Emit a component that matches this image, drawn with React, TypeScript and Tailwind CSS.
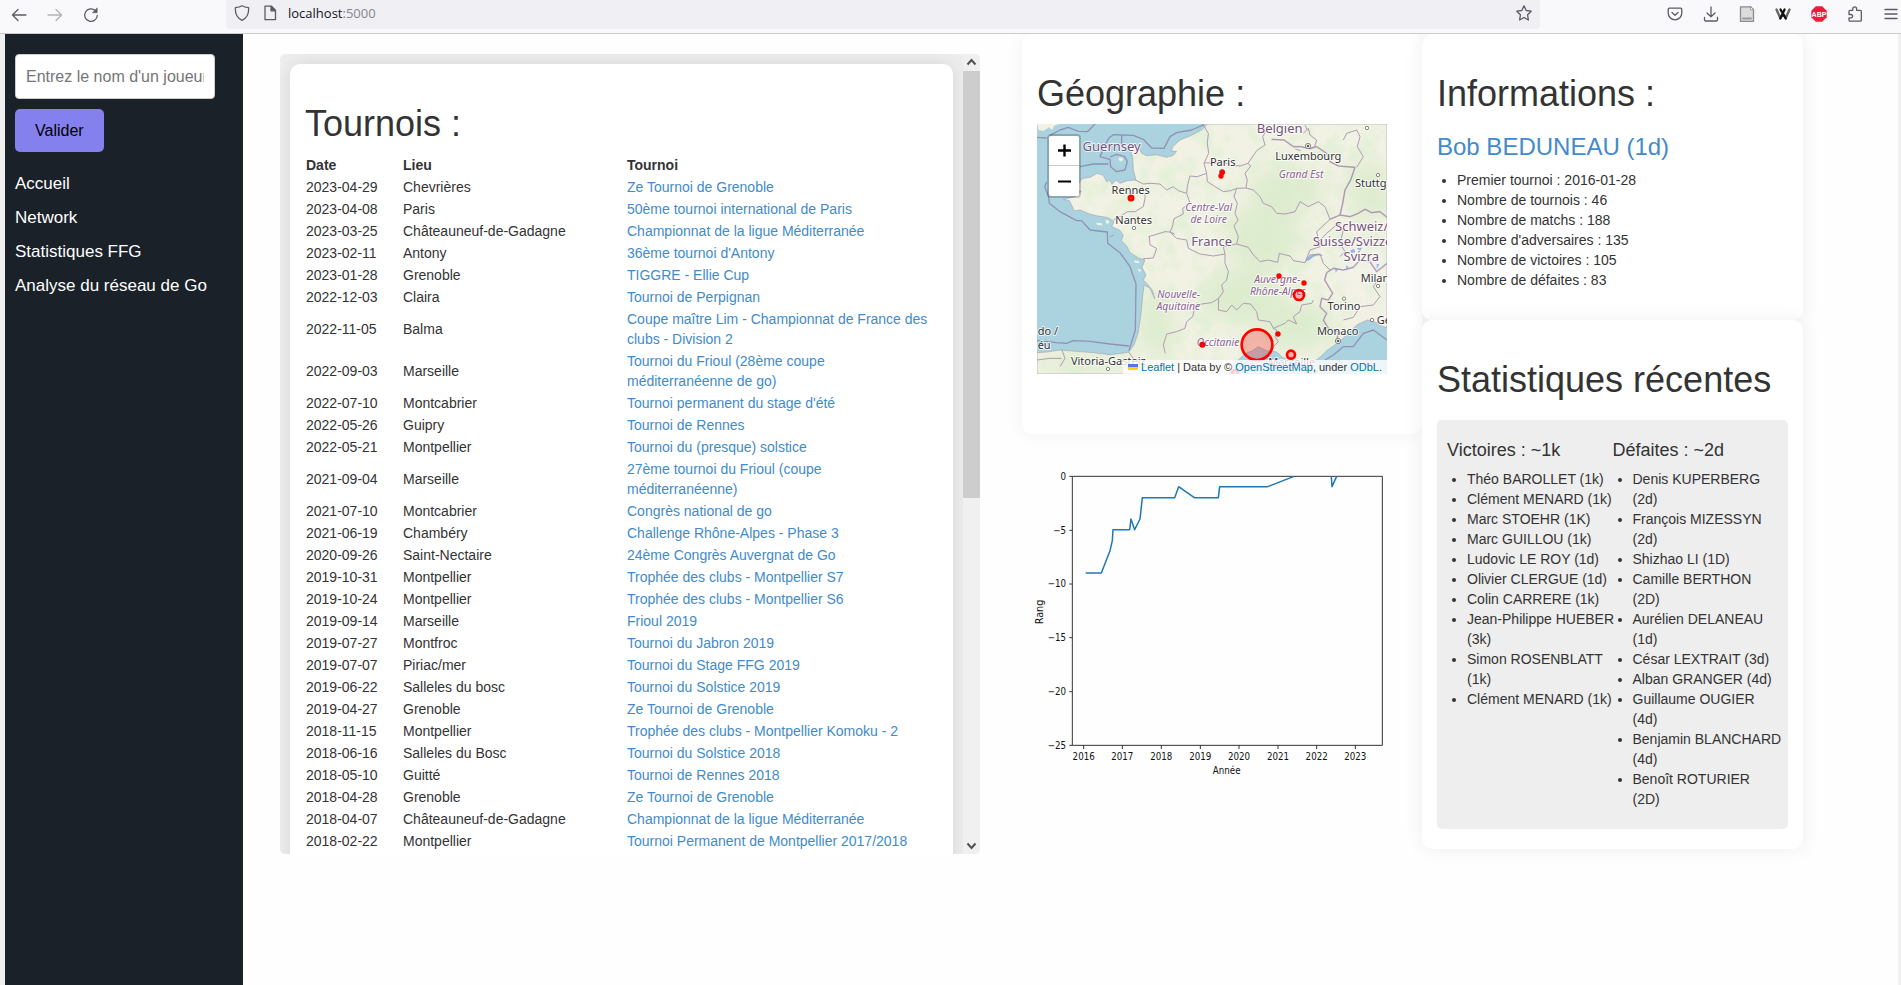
import React from "react";

type Tournament = [date: string, place: string, name: string];

const tournaments: Tournament[] = [
  ["2023-04-29", "Chevrières", "Ze Tournoi de Grenoble"],
  ["2023-04-08", "Paris", "50ème tournoi international de Paris"],
  ["2023-03-25", "Châteauneuf-de-Gadagne", "Championnat de la ligue Méditerranée"],
  ["2023-02-11", "Antony", "36ème tournoi d'Antony"],
  ["2023-01-28", "Grenoble", "TIGGRE - Ellie Cup"],
  ["2022-12-03", "Claira", "Tournoi de Perpignan"],
  ["2022-11-05", "Balma", "Coupe maître Lim - Championnat de France des clubs - Division 2"],
  ["2022-09-03", "Marseille", "Tournoi du Frioul (28ème coupe méditerranéenne de go)"],
  ["2022-07-10", "Montcabrier", "Tournoi permanent du stage d'été"],
  ["2022-05-26", "Guipry", "Tournoi de Rennes"],
  ["2022-05-21", "Montpellier", "Tournoi du (presque) solstice"],
  ["2021-09-04", "Marseille", "27ème tournoi du Frioul (coupe méditerranéenne)"],
  ["2021-07-10", "Montcabrier", "Congrès national de go"],
  ["2021-06-19", "Chambéry", "Challenge Rhône-Alpes - Phase 3"],
  ["2020-09-26", "Saint-Nectaire", "24ème Congrès Auvergnat de Go"],
  ["2019-10-31", "Montpellier", "Trophée des clubs - Montpellier S7"],
  ["2019-10-24", "Montpellier", "Trophée des clubs - Montpellier S6"],
  ["2019-09-14", "Marseille", "Frioul 2019"],
  ["2019-07-27", "Montfroc", "Tournoi du Jabron 2019"],
  ["2019-07-07", "Piriac/mer", "Tournoi du Stage FFG 2019"],
  ["2019-06-22", "Salleles du bosc", "Tournoi du Solstice 2019"],
  ["2019-04-27", "Grenoble", "Ze Tournoi de Grenoble"],
  ["2018-11-15", "Montpellier", "Trophée des clubs - Montpellier Komoku - 2"],
  ["2018-06-16", "Salleles du Bosc", "Tournoi du Solstice 2018"],
  ["2018-05-10", "Guitté", "Tournoi de Rennes 2018"],
  ["2018-04-28", "Grenoble", "Ze Tournoi de Grenoble"],
  ["2018-04-07", "Châteauneuf-de-Gadagne", "Championnat de la ligue Méditerranée"],
  ["2018-02-22", "Montpellier", "Tournoi Permanent de Montpellier 2017/2018"],
];

const facts = [
  "Premier tournoi : 2016-01-28",
  "Nombre de tournois : 46",
  "Nombre de matchs : 188",
  "Nombre d'adversaires : 135",
  "Nombre de victoires : 105",
  "Nombre de défaites : 83",
];

const wins = [
  "Théo BAROLLET (1k)",
  "Clément MENARD (1k)",
  "Marc STOEHR (1K)",
  "Marc GUILLOU (1k)",
  "Ludovic LE ROY (1d)",
  "Olivier CLERGUE (1d)",
  "Colin CARRERE (1k)",
  "Jean-Philippe HUEBER (3k)",
  "Simon ROSENBLATT (1k)",
  "Clément MENARD (1k)",
];

const losses = [
  "Denis KUPERBERG (2d)",
  "François MIZESSYN (2d)",
  "Shizhao LI (1D)",
  "Camille BERTHON (2D)",
  "Aurélien DELANEAU (1d)",
  "César LEXTRAIT (3d)",
  "Alban GRANGER (4d)",
  "Guillaume OUGIER (4d)",
  "Benjamin BLANCHARD (4d)",
  "Benoît ROTURIER\n(2D)",
];

function Icon({ label, className = "", children }: { label: string; className?: string; children: React.ReactNode }) {
  return (
    <button type="button" aria-label={label} className={`size-4 shrink-0 text-[#5b5b66] ${className}`}>
      <svg viewBox="0 0 16 16" className="size-4" fill="none" stroke="currentColor" strokeWidth="1.3" strokeLinecap="round" strokeLinejoin="round">
        {children}
      </svg>
    </button>
  );
}

function BrowserBar() {
  return (
    <header className="relative z-10 flex h-[34px] items-start border-b border-[#cccccf] bg-[#f9f9fb]">
      <div className="flex h-[29px] w-[226px] shrink-0 items-center gap-5 pl-[11px]">
        <Icon label="Page précédente">
          <path d="M15 8H1.5M7 2.5 1.5 8 7 13.5" />
        </Icon>
        <Icon label="Page suivante" className="opacity-45">
          <path d="M1 8h13.5M9 2.5 14.5 8 9 13.5" />
        </Icon>
        <Icon label="Actualiser">
          <path d="M14.3 8.5A6.3 6.3 0 1 1 12.3 3.5" />
          <path d="M14.2 1.2V5.7H9.7Z" fill="currentColor" strokeWidth="0.6" />
        </Icon>
      </div>
      <div className="flex h-[29px] min-w-0 flex-1 items-center rounded-b bg-[#f0f0f4] px-2 pb-1">
        <Icon label="Protection">
          <path d="M8 .8C6 2 3.5 2.5 1.4 2.7 1 8 3 13 8 15.3 13 13 15 8 14.6 2.7 12.5 2.5 10 2 8 .8Z" />
        </Icon>
        <Icon label="Site" className="ml-3">
          <path d="M3 1.2h6.5l4 4v9.5H3Z" />
          <path d="M9 1.5v4.3h4.3Z" fill="currentColor" />
        </Icon>
        <span className="ml-2.5 flex-1 font-['Open_Sans',sans-serif] text-[13px] leading-5 text-[#15141a]">
          localhost<span className="text-[#85848d]">:5000</span>
        </span>
        <Icon label="Marquer cette page">
          <path d="M8 .8l2.2 4.7 5 .7-3.6 3.6.8 5.2L8 12.5 3.6 15l.8-5.2L.8 6.2l5-.7Z" />
        </Icon>
      </div>
      <div className="flex h-[27px] w-[361px] shrink-0 items-center justify-end gap-5 pr-0.5">
        <Icon label="Pocket">
          <path d="M2.5 2.2h11a1.3 1.3 0 0 1 1.3 1.3V7a6.8 6.8 0 0 1-13.6 0V3.5a1.3 1.3 0 0 1 1.3-1.3Z" />
          <path d="M5 6.5 8 9.3 11 6.5" />
        </Icon>
        <Icon label="Téléchargements">
          <path d="M8 1v9.5M4 7l4 3.7L12 7M1.500 11.500v2.200q0 1.300 1.300 1.300h10.400q1.300 0 1.300-1.300v-2.200" />
        </Icon>
        <Icon label="Archive">
          <path d="M1.5.8h10l3 3v11.5h-13Z" fill="#dcdcdc" stroke="#8c8c8c" />
          <path d="M11.5.8v3h3Z" fill="#fff" stroke="#8c8c8c" strokeWidth="0.8" />
          <path d="M4 12.5h8" stroke="#999" strokeWidth="1.8" />
        </Icon>
        <Icon label="Wikiwand">
          <path d="M1.5 3.5 5.3 12 8 8l2.8 4L14.5 3.5" stroke="#666" strokeWidth="2.4" />
          <path d="M5.5 3.5 10.8 12.5M9.6 3.5 5.3 12.5" stroke="#111" strokeWidth="2.3" />
        </Icon>
        <Icon label="Adblock Plus">
          <path d="M4.8.3h6.4l4.5 4.5v6.4l-4.5 4.5H4.8L.3 11.2V4.8Z" fill="#ed1c3c" stroke="none" />
          <text x="8" y="10.5" textAnchor="middle" fontSize="7" fontWeight="700" fill="#fff" stroke="none" fontFamily="Liberation Sans, sans-serif">ABP</text>
        </Icon>
        <Icon label="Extensions">
          <path d="M2 8.5V5.3q0-1 1-1h2.8V2.8a1.9 1.9 0 0 1 3.8 0v1.5h3.7q1 0 1 1v8.9q0 1-1 1H3q-1 0-1-1v-2.4h2a1.65 1.65 0 0 0 0-3.3Z" />
        </Icon>
        <Icon label="Menu">
          <path d="M2 3.5h12M2 8h12M2 12.5h12" />
        </Icon>
      </div>
    </header>
  );
}

function Sidebar() {
  return (
    <aside className="w-[238px] shrink-0 bg-[#1a2129] px-2.5 pt-5 text-base">
      <form onSubmit={(e) => e.preventDefault()}>
        <input
          type="text"
          aria-label="Nom du joueur"
          placeholder="Entrez le nom d'un joueur"
          className="block h-[45px] w-[200px] rounded border border-[#ccc] bg-white px-2.5 placeholder:text-[#757575]"
        />
        <button type="submit" className="mt-2.5 block h-[43px] rounded-[5px] bg-[#8480ee] px-5 text-black">
          Valider
        </button>
      </form>
      <nav className="mt-[15px] flex flex-col text-[17px] leading-[34px] text-white">
        <a href="#accueil">Accueil</a>
        <a href="#network">Network</a>
        <a href="#ffg">Statistiques FFG</a>
        <a href="#analyse">Analyse du réseau de Go</a>
      </nav>
    </aside>
  );
}

function Tournaments() {
  return (
    <section className="mt-5 flex h-[800px] min-w-0 flex-[700] overflow-hidden rounded-[5px] bg-[#eee]">
      <div className="min-w-0 flex-1 overflow-y-auto p-2.5 [scrollbar-width:none]">
        <div className="rounded-[10px] bg-white px-[15px] pt-10 pb-20 shadow-[0_0_20px_rgba(0,0,0,0.1)]">
          <h1 className="mb-2.5 text-[36px] leading-10">Tournois :</h1>
          <table className="w-full table-fixed border-collapse text-left">
            <colgroup>
              <col className="w-[97px]" />
              <col className="w-[224px]" />
              <col />
            </colgroup>
            <thead>
              <tr>
                <th className="p-px">Date</th>
                <th className="p-px">Lieu</th>
                <th className="p-px">Tournoi</th>
              </tr>
            </thead>
            <tbody>
              {tournaments.map(([date, place, name]) => (
                <tr key={date}>
                  <td className="p-px">{date}</td>
                  <td className="p-px">{place}</td>
                  <td className="py-px pr-1.5 pl-px">
                    <a href="#tournoi" className="text-[#428bca]">{name}</a>
                  </td>
                </tr>
              ))}
            </tbody>
          </table>
        </div>
      </div>
      <div className="flex w-[17px] shrink-0 flex-col items-center bg-[#f0f0f0] text-[#505050]" aria-hidden="true">
        <svg viewBox="0 0 17 17" className="size-[17px]" fill="none" stroke="currentColor" strokeWidth="2">
          <path d="M4.5 10.5 8.5 6l4 4.5" />
        </svg>
        <div className="h-[427px] w-full bg-[#cdcdcd]" />
        <div className="flex-1" />
        <svg viewBox="0 0 17 17" className="size-[17px]" fill="none" stroke="currentColor" strokeWidth="2">
          <path d="M4.5 6.5 8.5 11l4-4.5" />
        </svg>
      </div>
    </section>
  );
}

const LAND =
  "M592 282 575 300 540 318 510 330 488 350 484 364 500 364 490 376 470 382 440 374 410 377 395 370 390 358 372 350 358 352 368 382 370 420 378 450 352 452 330 460 318 450 306 463 300 450 290 455 280 436 262 430 240 442 215 446 205 462 190 480 214 484 195 500 160 508 178 512 186 528 192 543 210 540 238 552 262 558 280 560 296 564 312 575 305 590 328 600 340 615 334 632 350 648 360 668 385 684 405 690 396 712 408 735 400 750 414 765 428 782 434 806 420 775 402 765 398 800 392 860 384 910 372 945 356 966 335 970 300 974 250 968 200 964 150 960 110 966 81 968V1032H655L670 1005 690 985 708 970 728 962 745 950 770 962 800 966 820 984 845 990 870 1004 905 1000 930 982 950 962 985 938 1010 915 1040 885 1072 870 1100 878 1118 890 1131 892V282Z";

const mapBorders = [
  "M578 282 595 310 592 340 596 370 582 400 590 430 592 455 615 470 640 485 662 482 680 475 708 474 712 450 705 430 722 408 714 400 690 408 660 406 640 395 610 400 582 398",
  "M714 400 740 362 765 345 758 320 770 300M590 430 562 440 540 438 532 468 530 490",
  "M376 450 400 462 420 460 450 462 470 480 490 470 505 482 530 490 540 520 518 535 520 552 492 566 488 588 480 606 494 612",
  "M300 620 312 615M352 545 375 545 400 530 406 500 396 470M352 545 330 560 310 570",
  "M415 620 430 616 465 605 480 606 500 625 530 630 535 655 570 672 610 678 645 672 640 650 680 642 715 652 728 672 750 695 775 690 803 697 808 670 840 678 850 692 885 698 900 660 930 650 920 605 960 568 945 530 925 515 895 530 870 515 855 545 825 552 800 550 785 530 760 520 750 500 730 480 708 474",
  "M680 475 672 500 682 520 675 550 684 570 672 588 685 620 680 642M400 686 430 684 440 655 420 645 418 620",
  "M645 672 645 700 655 725 650 750 635 765 640 785 626 805 605 818 575 822 555 828 548 860 530 875 525 895 500 905 470 912 460 945 466 970",
  "M626 805 625 840 650 845 665 825 680 840 700 820 722 822 740 845 745 870 780 875 790 895 800 900 795 920 805 935 790 950 782 964",
  "M790 895 825 880 835 870 860 882 850 860 870 845 875 825 905 820 910 810M885 698 900 675 930 672 940 700 960 720",
  "M785 328 822 330 850 350 872 350 900 356 920 350 950 370 960 395 985 408 1035 412 1022 450 1005 480 998 520 990 555",
  "M856 357 872 362M880 310 895 295 900 315 920 330 914 350 900 356M885 286 892 300M1000 330 1010 310 1040 300 1050 320 1042 350 1060 380 1040 412",
  "M990 555 960 568M990 555 1020 560 1045 550 1065 538 1085 548 1110 545 1131 562M950 728 970 715 1000 720 1030 712 1050 690 1080 695 1100 725 1131 700",
  "M950 728 944 750 968 790 955 810 935 805 930 830 950 850 940 870 955 895 985 905 980 935",
  "M356 966 370 985 362 1000 400 1018M155 958 165 985 150 1010M81 990 120 985 155 985M1000 870 1030 862 1050 830 1090 825 1110 800 1090 770 1110 740",
  "M930 650 920 640 950 610 985 580 1000 600 990 640 1005 665 990 680",
];

const nationalBorders = [mapBorders[9], mapBorders[11], mapBorders[12]];

const seaLines = [
  "M81 322 110 324M150 300 175 292 205 304 232 305 255 282M150 300 120 316",
  "M335 315 370 316 400 328 425 354 462 355 480 320 500 308 545 300 582 284",
  "M335 315 310 314 296 325 285 345 270 380 300 388 302 410 320 425 345 420 352 395 344 380 320 373 300 381M335 315 335 345M295 402 250 402 210 410",
  "M110 455 104 470 116 500 118 520 150 545 200 572 215 572 240 600 292 606 293 640 330 668 360 710 378 762 376 900 357 962",
  "M81 932 140 938 170 940 190 932 240 934 300 942 357 948",
  "M945 990 970 975 1000 950 1030 950 1060 910 1090 900 1131 930",
];

type Label = { x: number; y: number; t: string; kind: "city" | "country" | "region"; anchor?: "start" | "middle" };

const labels: Label[] = [
  { x: 305, y: 364, t: "Guernsey", kind: "country" },
  { x: 809, y: 309, t: "Belgien", kind: "country" },
  { x: 605, y: 647, t: "France", kind: "country" },
  { x: 975, y: 603, t: "Schweiz/", kind: "country", anchor: "start" },
  { x: 908, y: 648, t: "Suisse/Svizzera/", kind: "country", anchor: "start" },
  { x: 1054, y: 693, t: "Svizra", kind: "country" },
  { x: 638, y: 409, t: "Paris", kind: "city" },
  { x: 362, y: 491, t: "Rennes", kind: "city" },
  { x: 371, y: 582, t: "Nantes", kind: "city" },
  { x: 895, y: 391, t: "Luxembourg", kind: "city" },
  { x: 1035, y: 472, t: "Stuttgart", kind: "city", anchor: "start" },
  { x: 1052, y: 755, t: "Milano", kind: "city", anchor: "start" },
  { x: 1002, y: 840, t: "Torino", kind: "city" },
  { x: 1100, y: 881, t: "Genova", kind: "city", anchor: "start" },
  { x: 983, y: 915, t: "Monaco", kind: "city" },
  { x: 845, y: 1009, t: "Marseille", kind: "city" },
  { x: 295, y: 1004, t: "Vitoria-Gasteiz", kind: "city" },
  { x: 83, y: 915, t: "do /", kind: "city", anchor: "start" },
  { x: 83, y: 956, t: "éu", kind: "city", anchor: "start" },
  { x: 873, y: 443, t: "Grand Est", kind: "region" },
  { x: 596, y: 543, t: "Centre-Val", kind: "region" },
  { x: 596, y: 579, t: "de Loire", kind: "region" },
  { x: 506, y: 804, t: "Nouvelle-", kind: "region" },
  { x: 505, y: 839, t: "Aquitaine", kind: "region" },
  { x: 802, y: 760, t: "Auvergne-", kind: "region" },
  { x: 804, y: 795, t: "Rhône-Alpes", kind: "region" },
  { x: 624, y: 947, t: "Occitanie", kind: "region" },
];

const labelStyle = {
  city: { size: 33, fill: "#333", style: "normal" },
  country: { size: 39, fill: "#75547b", style: "normal" },
  region: { size: 31, fill: "#8a6392", style: "italic" },
};

const townDots = [
  [372, 594], [1104, 435], [1104, 768], [1002, 806], [1086, 870], [294, 1017], [1071, 294],
];

const markers = [
  [363, 504, 6, 9], [637, 427, 4, 8], [633, 438, 4, 8], [807, 738, 4, 8], [882, 759, 4, 8],
  [867, 795, 15, 8], [804, 912, 4, 8], [577, 944, 5, 8], [741, 944, 46, 8], [843, 974, 12, 8], [675, 1029, 9, 8],
];

function FranceMap() {
  return (
    <div className="relative h-[250px] w-[350px] max-w-full overflow-hidden bg-[#aad3df]">
      <svg viewBox="81 282 1050 750" className="block h-[250px] w-[350px]" role="img" aria-label="Carte des tournois">
        <defs>
          <clipPath id="land"><path d={LAND} /></clipPath>
          <filter id="forest" x="0" y="0" width="1" height="1">
            <feTurbulence type="fractalNoise" baseFrequency="0.018" numOctaves="5" seed="8" />
            <feColorMatrix values="0 0 0 0 0.72  0 0 0 0 0.86  0 0 0 0 0.64  0 3.6 0 0 -1.55" />
          </filter>
          <filter id="soft" x="-50%" y="-50%" width="200%" height="200%"><feGaussianBlur stdDeviation="28" /></filter>
        </defs>
        <path d={LAND} fill="#f2f2e4" />
        <path d="M81 282H148L132 288 126 300 118 292 100 303 86 300Z" fill="#f2f2e4" />
        <g clipPath="url(#land)">
          <g filter="url(#soft)" fill="#d3e8c2" opacity="0.65">
            <ellipse cx="830" cy="480" rx="110" ry="70" />
            <ellipse cx="760" cy="620" rx="110" ry="100" />
            <ellipse cx="700" cy="800" rx="130" ry="80" />
            <ellipse cx="440" cy="880" rx="50" ry="100" />
            <ellipse cx="860" cy="890" rx="110" ry="70" />
            <ellipse cx="1080" cy="480" rx="60" ry="90" />
            <ellipse cx="200" cy="1000" rx="120" ry="25" />
          </g>
          <rect x="81" y="282" width="1050" height="750" filter="url(#forest)" opacity="0.6" />
          <g filter="url(#soft)" fill="#f3f2ea" opacity="0.8">
            <ellipse cx="1060" cy="710" rx="70" ry="50" />
            <ellipse cx="1070" cy="820" rx="50" ry="30" />
          </g>
        </g>
        <path d="M324 384l12-2 4 8-10 5ZM258 578l18 2 2 6-16-1ZM370 692l14 0 6 8-14-2ZM382 716l14 4-8 6ZM286 572l8-3 5 10-10 2Z" fill="#f2f2e4" />
        <path d="M888 690q15-22 44-18l8 6q-26-6-44 14ZM1020 662l12-6 4 10-12 4ZM1040 655l16-2-6 10ZM1008 706l8 4-6 12ZM975 712l8 8-6 8ZM1100 702l8 0-8 16Z" fill="#8fb7e8" />
        <g fill="none" stroke="#ad9cb2" strokeWidth="3" strokeLinejoin="round">
          {mapBorders.map((d) => <path key={d} d={d} />)}
        </g>
        <g fill="none" stroke="#a78fab" strokeWidth="5" opacity="0.5" strokeLinejoin="round">
          {nationalBorders.map((d) => <path key={d} d={d} />)}
        </g>
        <g fill="none" stroke="#8d86ad" strokeWidth="4" strokeLinejoin="round" opacity="0.85">
          {seaLines.map((d) => <path key={d} d={d} />)}
        </g>
        <path d={LAND} fill="none" stroke="#a5a3b8" strokeWidth="2" />
        <g fill="#fff" stroke="#555" strokeWidth="2">
          {townDots.map(([x, y]) => <circle key={`${x}-${y}`} cx={x} cy={y} r="5" />)}
          {[[894, 348], [984, 933], [636, 426]].map(([x, y]) => (
            <g key={`${x}-${y}`}>
              <circle cx={x} cy={y} r="8" />
              <circle cx={x} cy={y} r="3" fill="#333" />
            </g>
          ))}
        </g>
        <g fontFamily="Noto Sans, sans-serif" stroke="#fff" strokeOpacity="0.75" strokeWidth="6" strokeLinejoin="round" paintOrder="stroke">
          {labels.map((l) => (
            <text
              key={l.t}
              x={l.x}
              y={l.y}
              textAnchor={l.anchor ?? "middle"}
              fontSize={labelStyle[l.kind].size}
              fontStyle={labelStyle[l.kind].style}
              fill={labelStyle[l.kind].fill}
            >
              {l.t}
            </text>
          ))}
        </g>
        <g stroke="#f00" fill="#f00" fillOpacity="0.25">
          {markers.map(([x, y, r, w]) => <circle key={`${x}-${y}`} cx={x} cy={y} r={r} strokeWidth={w} />)}
        </g>
      </svg>
      <div className="absolute top-2.5 left-2.5 flex flex-col rounded border-2 border-black/20 bg-clip-padding">
        <button type="button" aria-label="Zoom avant" className="flex size-[30px] items-center justify-center rounded-t-xs border-b border-[#ccc] bg-white">
          <svg viewBox="0 0 13 13" className="size-[13px]" stroke="#000" strokeWidth="2.4"><path d="M0 6.5h13M6.5.5v12" /></svg>
        </button>
        <button type="button" aria-label="Zoom arrière" className="flex size-[30px] items-center justify-center rounded-b-xs bg-white">
          <svg viewBox="0 0 13 13" className="size-[13px]" stroke="#000" strokeWidth="2"><path d="M0 6.5h13" /></svg>
        </button>
      </div>
      <div className="absolute right-0 bottom-0 flex h-3.5 items-center gap-[3px] bg-white/80 px-[5px] font-['Liberation_Sans',Arial,sans-serif] text-[11px] leading-[14px] whitespace-nowrap text-[#333]">
        <svg viewBox="0 0 10 6" className="h-1.5 w-2.5"><path d="M0 0h10v3H0Z" fill="#4c7be1" /><path d="M0 3h10v3H0Z" fill="#ffd500" /></svg>
        <span>
          <a href="#leaflet" className="text-[#0078a8]">Leaflet</a> | Data by © <a href="#osm" className="text-[#0078a8]">OpenStreetMap</a>, under <a href="#odbl" className="text-[#0078a8]">ODbL</a>.
        </span>
      </div>
    </div>
  );
}

const xTicks = [221, 337, 454, 571, 687, 804, 920, 1036];
const yTicks = [139, 301, 462, 623, 785, 946];

function RankChart() {
  return (
    <svg viewBox="36 12 1200 1050" className="block w-full" role="img" aria-label="Évolution du rang" fontFamily="DejaVu Sans Condensed, DejaVu Sans, sans-serif" fontSize="29" fill="#111">
      <g stroke="#333" strokeWidth="3" fill="none">
        <path d="M187 139H1117V946H187Z" />
        {xTicks.map((x) => <path key={x} d={`M${x} 946V957`} />)}
        {yTicks.map((y) => <path key={y} d={`M178 ${y}H187`} />)}
      </g>
      <path
        d="M227 429H274L300 362 307 332 309 299H359L363 267 374 299 390 267 397 203H494L506 170 553 203H625L629 170H773L852 139M964 139 966 170 980 139"
        fill="none"
        stroke="#1f77b4"
        strokeWidth="4.5"
        strokeLinejoin="round"
      />
      {xTicks.map((x, i) => (
        <text key={x} x={x} y="991" textAnchor="middle">{2016 + i}</text>
      ))}
      {yTicks.map((y, i) => (
        <text key={y} x="168" y={y + 10} textAnchor="end">{i === 0 ? "0" : `−${i * 5}`}</text>
      ))}
      <text x="650" y="1033" textAnchor="middle">Année</text>
      <text x="98" y="546" textAnchor="middle" transform="rotate(-90 98 546)" fontFamily="DejaVu Sans, sans-serif">Rang</text>
    </svg>
  );
}

function Opponents({ title, names }: { title: string; names: string[] }) {
  return (
    <div className="min-w-0 flex-1">
      <h4 className="mb-[9px] text-lg leading-5">{title}</h4>
      <ul className="-mr-1 list-disc pl-5 whitespace-pre-line">
        {names.map((name, i) => <li key={i}>{name}</li>)}
      </ul>
    </div>
  );
}

export default function App() {
  return (
    <div className="flex min-h-screen flex-col bg-[#fefefe] font-['Liberation_Sans',Arial,sans-serif] text-sm leading-5 text-[#333]">
      <BrowserBar />
      <div className="flex flex-1 border-r-[3px] border-l-[5px] border-[#f0f0f0]">
        <Sidebar />
        <main className="flex min-w-0 flex-1 items-start pr-[95px] pl-[37px]">
          <Tournaments />
          <div className="ml-[42px] min-w-0 flex-[400]">
            <section className="h-[400px] rounded-[10px] bg-white px-[15px] pt-10 shadow-[0_0_20px_rgba(0,0,0,0.05)]">
              <h1 className="mb-2.5 text-[36px] leading-10">Géographie :</h1>
              <FranceMap />
            </section>
            <RankChart />
          </div>
          <div className="min-w-0 flex-[381]">
            <section className="rounded-[10px] bg-white px-[15px] pt-10 pb-[30px] shadow-[0_0_20px_rgba(0,0,0,0.07)]">
              <h1 className="text-[36px] leading-10">Informations :</h1>
              <h3 className="mt-5 mb-2.5 text-2xl leading-[26px]">
                <a href="#joueur" className="text-[#428bca]">Bob BEDUNEAU (1d)</a>
              </h3>
              <ul className="list-disc pl-5">
                {facts.map((fact) => <li key={fact}>{fact}</li>)}
              </ul>
            </section>
            <section className="rounded-[10px] bg-white px-[15px] pt-10 pb-5 shadow-[0_0_20px_rgba(0,0,0,0.07)]">
              <h1 className="text-[36px] leading-10">Statistiques récentes</h1>
              <div className="mt-5 flex rounded-[5px] bg-[#eee] px-2.5 py-5">
                <Opponents title="Victoires : ~1k" names={wins} />
                <Opponents title="Défaites : ~2d" names={losses} />
              </div>
            </section>
          </div>
        </main>
      </div>
    </div>
  );
}
